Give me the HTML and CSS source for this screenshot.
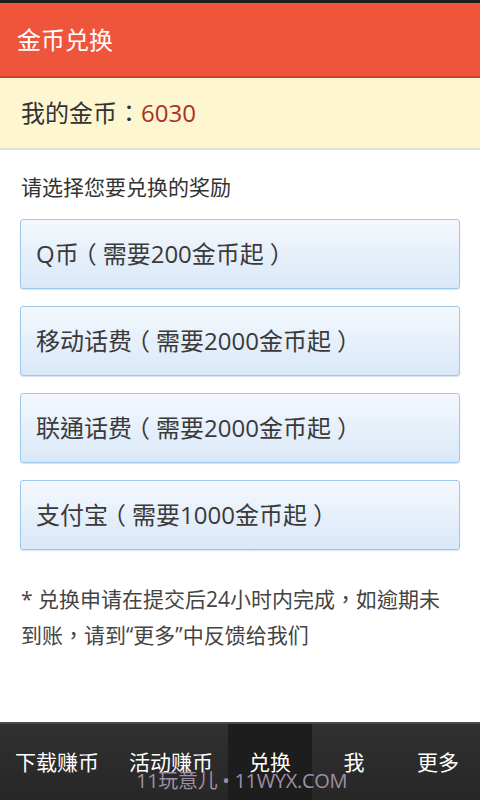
FILE: index.html
```html
<!DOCTYPE html>
<html lang="zh-Hant">
<head>
    <meta charset="UTF-8">
    <title>金币兑换</title>
    <link rel="stylesheet" href="styles.css">
</head>
<body>
<div id="page">
    <div class="status"></div>
    <div class="header">金币兑换</div>
    <div class="coins">我的金币：<span class="num">6030</span></div>

    <div class="content">
        <p class="tip">请选择您要兑换的奖励</p>
        <ul class="rewards">
            <li>Q币<span class="paren">（</span>需要200金币起<span class="paren">）</span></li>
            <li>移动话费<span class="paren">（</span>需要2000金币起<span class="paren">）</span></li>
            <li>联通话费<span class="paren">（</span>需要2000金币起<span class="paren">）</span></li>
            <li>支付宝<span class="paren">（</span>需要1000金币起<span class="paren">）</span></li>
        </ul>
        <p class="note">* 兑换申请在提交后24小时内完成，如逾期未到账，请到“更多”中反馈给我们</p>
    </div>

    <div class="nav">
        <a href="#" class="wide">下载赚币</a>
        <a href="#" class="wide">活动赚币</a>
        <a href="#" class="active">兑换</a>
        <a href="#">我</a>
        <a href="#">更多</a>
        <span class="mark">11玩意儿 • 11WYX.COM</span>
    </div>
</div>
</body>
</html>
```

FILE: styles.css
```css
* {
    margin: 0;
    padding: 0;
}

body {
    font-family: "Open Sans", "Noto Sans CJK TC", sans-serif;
    background-color: #fff;
}

#page {
    width: 480px;
    height: 800px;
    display: flex;
    flex-direction: column;
    overflow: hidden;
}

.status {
    height: 3px;
    background-color: #1e1e1e;
}

.header {
    height: 73px;
    line-height: 73px;
    padding-left: 17px;
    background-color: #ef553a;
    border-bottom: 2px solid #c9432d;
    color: #fff;
    font-size: 24px;
}

.coins {
    height: 70px;
    line-height: 70px;
    padding-left: 21px;
    background-color: #fef6d1;
    border-bottom: 2px solid #e4e1d6;
    color: #333;
    font-size: 24px;
}

.coins .num {
    color: #a8321f;
}

.content {
    padding: 0 20px;
}

.tip {
    margin-top: 22px;
    line-height: 30px;
    padding-left: 1px;
    font-size: 21px;
    color: #333;
}

.rewards {
    list-style: none;
    margin-top: 17px;
}

.rewards li {
    height: 68px;
    line-height: 68px;
    padding-left: 15px;
    margin-bottom: 17px;
    border: 1px solid #9ec8ea;
    border-radius: 3px;
    background: linear-gradient(#f4f8fd, #d9e8f8);
    box-shadow: 0 1px 1px rgba(120, 160, 200, 0.3);
    font-size: 24px;
    color: #3a3a3a;
}

/* 全角括号居中：半宽字形两边各补 1/4 字 */
.rewards .paren {
    font-feature-settings: "halt";
    padding: 0 0.25em;
}

.note {
    margin-top: 31px;
    padding: 0 12px 0 1px;
    line-height: 36px;
    font-size: 21px;
    color: #444;
}

.nav {
    margin-top: auto;
    height: 76px;
    border-top: 2px solid #4b4b4b;
    background: linear-gradient(#303030, #272727);
    display: flex;
    position: relative;
}

.nav a {
    width: 84px;
    line-height: 76px;
    text-align: center;
    color: #fff;
    text-decoration: none;
    font-size: 21px;
}

.nav a.wide {
    width: 114px;
}

.nav a.active {
    background-color: #1d1d1d;
}

.mark {
    position: absolute;
    left: 136px;
    top: 41px;
    font-size: 20px;
    letter-spacing: -0.3px;
    color: #a08fa3;
    white-space: nowrap;
}
```
